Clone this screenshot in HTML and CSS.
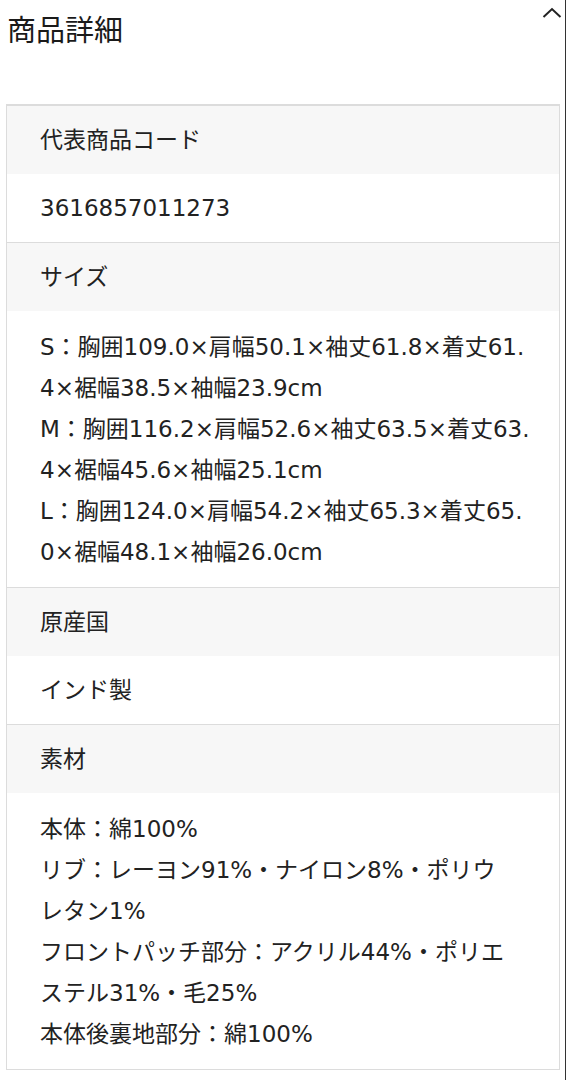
FILE: index.html
```html
<!DOCTYPE html>
<html lang="ja">
<head>
<meta charset="utf-8">
<title>商品詳細</title>
<link rel="stylesheet" href="styles.css">
</head>
<body>
<div class="page">
  <section class="detail">
    <div class="detail-head">
      <h2 class="detail-title">商品詳細</h2>
      <button class="toggle" aria-label="閉じる">
        <svg width="20" height="12" viewBox="0 0 20 12"><polyline points="1.5,10 10,2 18.5,10" fill="none" stroke="#222" stroke-width="2"/></svg>
      </button>
    </div>
    <dl class="spec">
      <dt class="spec-label">代表商品コード</dt>
      <dd class="spec-value">3616857011273</dd>
      <dt class="spec-label">サイズ</dt>
      <dd class="spec-value spec-value--multi">
        <p>S：胸囲109.0×肩幅50.1×袖丈61.8×着丈61.<br>4×裾幅38.5×袖幅23.9cm</p>
        <p>M：胸囲116.2×肩幅52.6×袖丈63.5×着丈63.<br>4×裾幅45.6×袖幅25.1cm</p>
        <p>L：胸囲124.0×肩幅54.2×袖丈65.3×着丈65.<br>0×裾幅48.1×袖幅26.0cm</p>
      </dd>
      <dt class="spec-label">原産国</dt>
      <dd class="spec-value">インド製</dd>
      <dt class="spec-label">素材</dt>
      <dd class="spec-value spec-value--multi spec-value--last">
        <p>本体：綿100%</p>
        <p>リブ：レーヨン91%・ナイロン8%・ポリウ<br>レタン1%</p>
        <p>フロントパッチ部分：アクリル44%・ポリエ<br>ステル31%・毛25%</p>
        <p>本体後裏地部分：綿100%</p>
      </dd>
    </dl>
  </section>
</div>
</body>
</html>
```

FILE: styles.css
```css
html, body {
  margin: 0;
  padding: 0;
  background: #fff;
}
body {
  font-family: "DejaVu Sans", "Noto Sans CJK JP", sans-serif;
  color: #222;
}
.page {
  width: 565px;
  min-height: 1080px;
  border-right: 1px solid #333;
}
.detail-head {
  display: flex;
  justify-content: space-between;
  align-items: flex-start;
  padding: 8px 3px 0 7px;
  height: 96px;
}
.detail-title {
  margin: 0;
  font-family: "Noto Sans CJK JP", sans-serif;
  font-size: 29px;
  font-weight: 400;
  line-height: 40px;
  color: #1a1a1a;
}
.toggle {
  border: 0;
  background: none;
  padding: 0;
  margin-top: -1px;
  display: flex;
}
.spec {
  margin: 0 5px 0 6px;
  border: 1px solid #dcdcdc;
  border-top-width: 2px;
}
.spec-label,
.spec-value {
  margin: 0;
  padding: 13.5px 20px 13.5px 33px;
  font-size: 23px;
  line-height: 41px;
}
.spec-label {
  background: #f7f7f7;
}
.spec-value {
  background: #fff;
  border-bottom: 1px solid #dcdcdc;
}
.spec-value--multi {
  padding-top: 16px;
  padding-bottom: 14px;
}
.spec-value--last {
  border-bottom: 0;
}
.spec-value p {
  margin: 0;
}
```
